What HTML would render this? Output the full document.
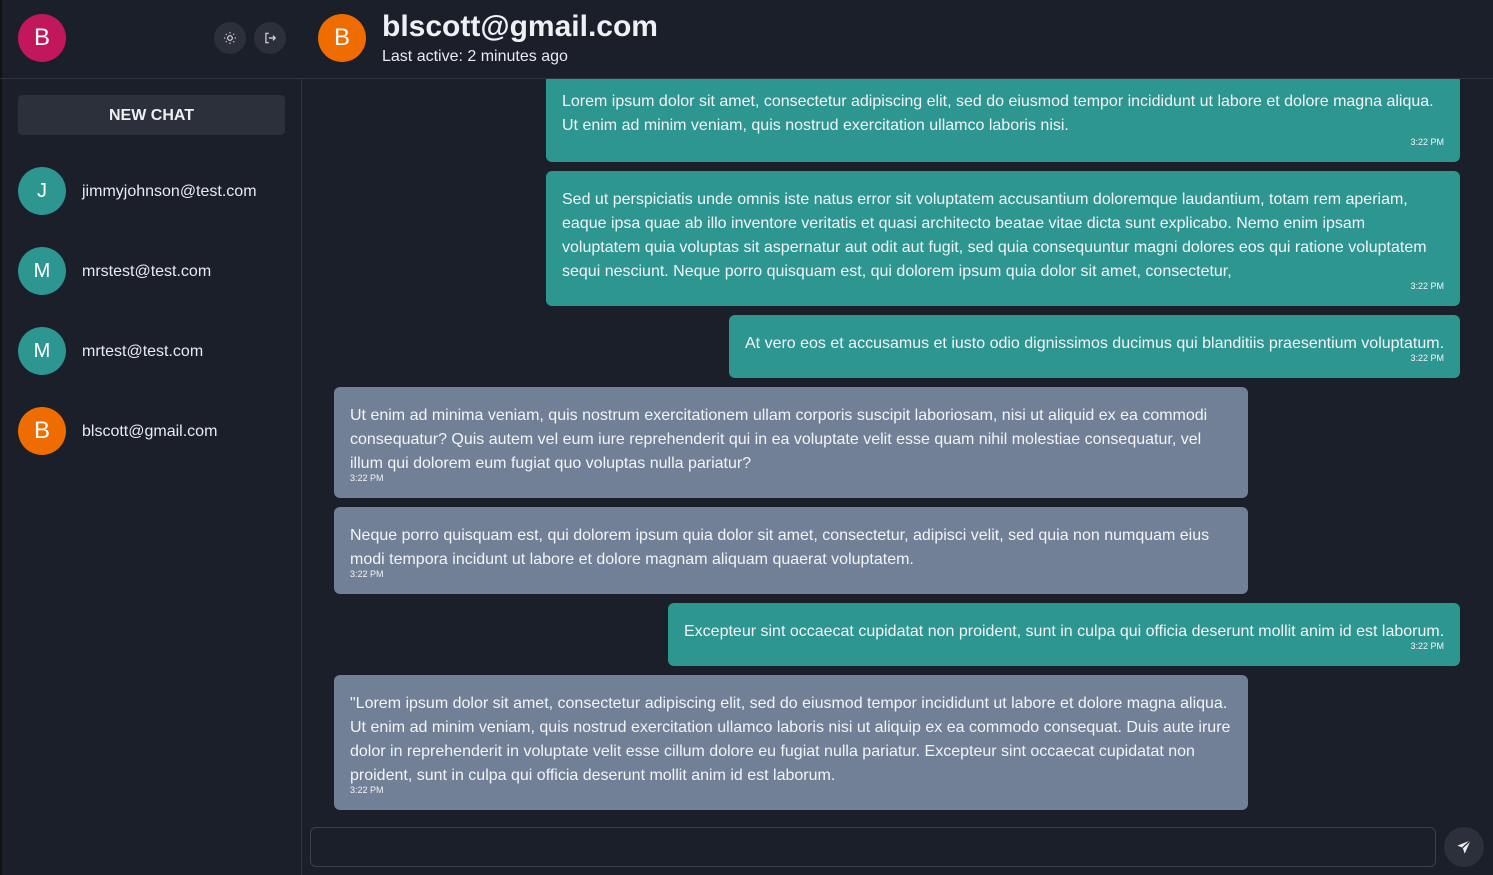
<!DOCTYPE html>
<html><head><meta charset="utf-8"><style>
*{box-sizing:border-box;margin:0;padding:0}
body{width:1493px;height:875px;background:#1b1f2a;font-family:"Liberation Sans",sans-serif;color:#e8eaef;position:relative;overflow:hidden}
.av{position:absolute;width:48px;height:48px;border-radius:50%;color:#fff;font-size:24px;display:flex;align-items:center;justify-content:center}
.teal{background:#2e9690}
.ic{position:absolute;width:32px;height:32px;border-radius:50%;background:#2b303b;display:flex;align-items:center;justify-content:center}
.contact{position:absolute;left:82px;font-size:16px;color:#e8eaef}
.b{position:absolute;border-radius:6px;padding:17px 16px 11px;font-size:16px;line-height:24px;color:#f2f4f6;white-space:normal}
.r{background:#2e9690;right:33px}
.l{background:#718096;left:334px;width:914px}
.ts{font-size:9px;line-height:10px;margin-top:-3px}
.r .ts{text-align:right}
</style></head><body>
<div style="position:absolute;left:0;top:0;width:2px;height:875px;background:#111"></div>
<div style="position:absolute;left:0;top:78px;width:1493px;height:1px;background:#2d3340"></div>
<div style="position:absolute;left:301px;top:79px;width:1px;height:796px;background:#2d3340"></div>

<div class="av" style="left:18px;top:14px;background:#c2185b">B</div>
<div class="ic" style="left:214px;top:22px"><svg width="14" height="14" viewBox="0 0 24 24" fill="none" stroke="#ddd" stroke-width="2"><circle cx="12" cy="12" r="4"/><path d="M12 2v2M12 20v2M2 12h2M20 12h2M4.9 4.9l1.4 1.4M17.7 17.7l1.4 1.4M4.9 19.1l1.4-1.4M17.7 6.3l1.4-1.4"/></svg></div>
<div class="ic" style="left:254px;top:22px"><svg width="14" height="14" viewBox="0 0 24 24" fill="none" stroke="#ddd" stroke-width="2"><path d="M10 4H5v16h5M10 12h11M17 8l4 4-4 4"/></svg></div>

<div class="av" style="left:318px;top:14px;background:#ef6c00">B</div>
<div style="position:absolute;left:382px;top:10px;font-size:30px;font-weight:bold;color:#eef0f4">blscott@gmail.com</div>
<div style="position:absolute;left:382px;top:48px;font-size:16px">Last active: 2 minutes ago</div>

<div style="position:absolute;left:18px;top:95px;width:267px;height:40px;background:#2b303b;border-radius:4px;display:flex;align-items:center;justify-content:center;font-weight:bold;font-size:16px;color:#eef0f4;padding-top:2px">NEW CHAT</div>

<div class="av teal" style="left:18px;top:167px;font-size:20px">J</div><div class="contact" style="top:183px">jimmyjohnson@test.com</div>
<div class="av teal" style="left:18px;top:247px;font-size:20px">M</div><div class="contact" style="top:263px">mrstest@test.com</div>
<div class="av teal" style="left:18px;top:327px;font-size:20px">M</div><div class="contact" style="top:343px">mrtest@test.com</div>
<div class="av" style="left:18px;top:407px;background:#ef6c00">B</div><div class="contact" style="top:423px">blscott@gmail.com</div>

<div style="position:absolute;left:302px;top:79px;width:1191px;height:740px;overflow:hidden">
<div class="b r" style="top:-4px;width:914px;height:87px;padding-top:15px">Lorem ipsum dolor sit amet, consectetur adipiscing elit, sed do eiusmod tempor incididunt ut labore et dolore magna aliqua. Ut enim ad minim veniam, quis nostrud exercitation ullamco laboris nisi.<div class="ts" style="margin-top:-1px">3:22 PM</div></div>
</div>
<div class="b r" style="top:171px;width:914px;height:135px">Sed ut perspiciatis unde omnis iste natus error sit voluptatem accusantium doloremque laudantium, totam rem aperiam, eaque ipsa quae ab illo inventore veritatis et quasi architecto beatae vitae dicta sunt explicabo. Nemo enim ipsam voluptatem quia voluptas sit aspernatur aut odit aut fugit, sed quia consequuntur magni dolores eos qui ratione voluptatem sequi nesciunt. Neque porro quisquam est, qui dolorem ipsum quia dolor sit amet, consectetur,<div class="ts">3:22 PM</div></div>
<div class="b r" style="top:315px;width:731px;height:63px;white-space:nowrap">At vero eos et accusamus et iusto odio dignissimos ducimus qui blanditiis praesentium voluptatum.<div class="ts">3:22 PM</div></div>
<div class="b l" style="top:387px;height:111px">Ut enim ad minima veniam, quis nostrum exercitationem ullam corporis suscipit laboriosam, nisi ut aliquid ex ea commodi consequatur? Quis autem vel eum iure reprehenderit qui in ea voluptate velit esse quam nihil molestiae consequatur, vel illum qui dolorem eum fugiat quo voluptas nulla pariatur?<div class="ts">3:22 PM</div></div>
<div class="b l" style="top:507px;height:87px">Neque porro quisquam est, qui dolorem ipsum quia dolor sit amet, consectetur, adipisci velit, sed quia non numquam eius modi tempora incidunt ut labore et dolore magnam aliquam quaerat voluptatem.<div class="ts">3:22 PM</div></div>
<div class="b r" style="top:603px;width:792px;height:63px;white-space:nowrap;overflow:hidden">Excepteur sint occaecat cupidatat non proident, sunt in culpa qui officia deserunt mollit anim id est laborum.<div class="ts">3:22 PM</div></div>
<div class="b l" style="top:675px;height:135px">"Lorem ipsum dolor sit amet, consectetur adipiscing elit, sed do eiusmod tempor incididunt ut labore et dolore magna aliqua. Ut enim ad minim veniam, quis nostrud exercitation ullamco laboris nisi ut aliquip ex ea commodo consequat. Duis aute irure dolor in reprehenderit in voluptate velit esse cillum dolore eu fugiat nulla pariatur. Excepteur sint occaecat cupidatat non proident, sunt in culpa qui officia deserunt mollit anim id est laborum.<div class="ts">3:22 PM</div></div>

<div style="position:absolute;left:310px;top:827px;width:1126px;height:40px;border:1px solid #3b404c;border-radius:6px"></div>
<div class="ic" style="left:1444px;top:827px;width:40px;height:40px"><svg width="16" height="16" viewBox="0 0 24 24"><path d="M22 2L2 10l8 3 3 9z" fill="#f0f0f0"/><path d="M22 2L10 13" stroke="#2b303b" stroke-width="2"/></svg></div>
</body></html>
